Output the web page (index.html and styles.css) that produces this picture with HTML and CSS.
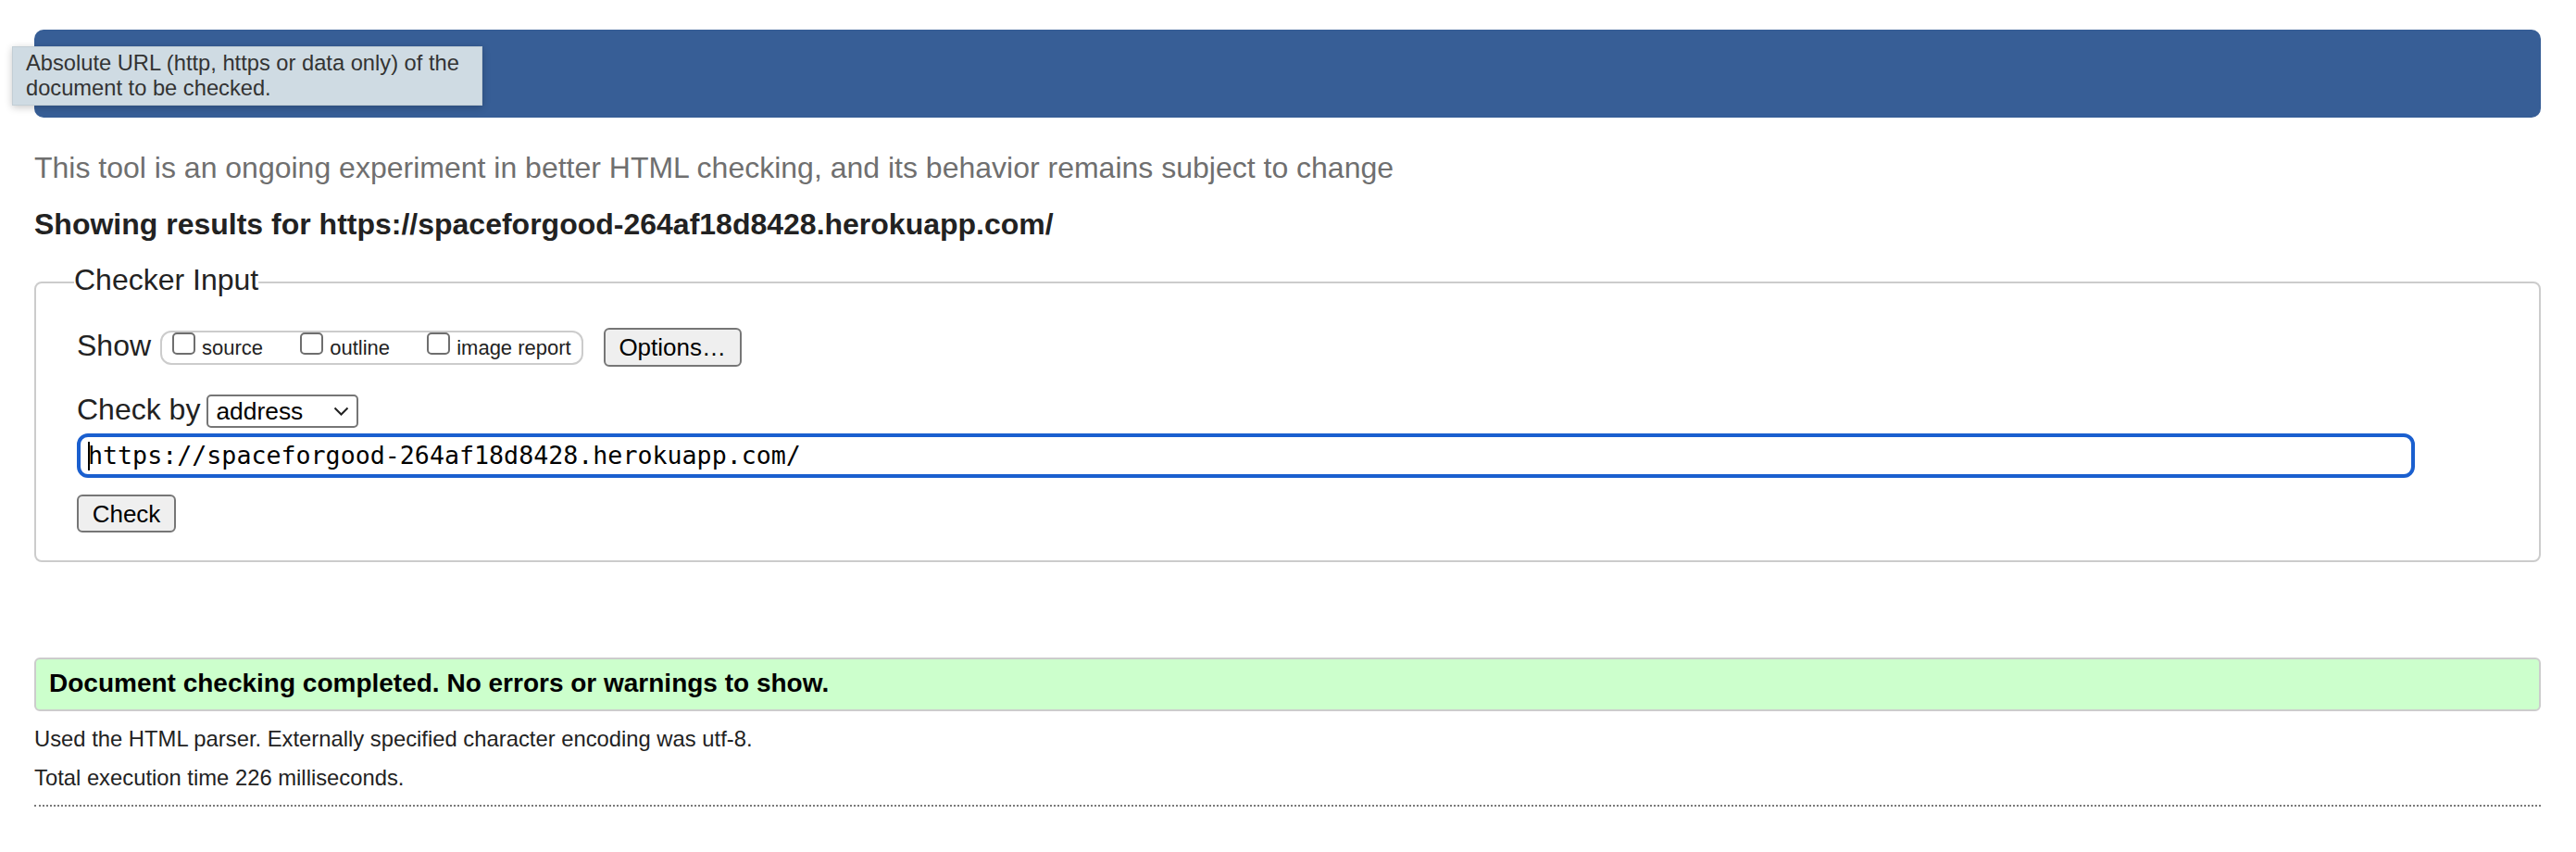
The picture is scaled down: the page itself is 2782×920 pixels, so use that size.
FILE: index.html
```html
<!DOCTYPE html>
<html lang="en">
<head>
<meta charset="utf-8">
<title>Nu Html Checker</title>
<link rel="stylesheet" href="styles.css">
</head>
<body>
<header class="banner"></header>
<div class="tooltip">Absolute URL (http, https or data only) of the<br>document to be checked.</div>
<p class="intro">This tool is an ongoing experiment in better HTML checking, and its behavior remains subject to change</p>
<p class="showing">Showing results for https://spaceforgood-264af18d8428.herokuapp.com/</p>
<fieldset class="checker">
  <legend class="legend">Checker Input</legend>
  <div class="row row-show">
    <span class="label show-label">Show</span>
    <div class="show-group">
      <label class="opt"><span class="cb"></span>source</label>
      <label class="opt"><span class="cb"></span>outline</label>
      <label class="opt"><span class="cb"></span>image report</label>
    </div>
    <button class="btn btn-options" type="button">Options…</button>
  </div>
  <div class="row row-by">
    <span class="label by-label">Check by</span>
    <div class="select"><span class="select-text">address</span><svg class="chev" width="17" height="10" viewBox="0 0 17 10"><polyline points="1.5,1.5 8.5,8.5 15.5,1.5" fill="none" stroke="#222" stroke-width="2"/></svg></div>
  </div>
  <div class="urlbox"><span class="caret"></span><span class="url">https://spaceforgood-264af18d8428.herokuapp.com/</span></div>
  <div class="row-check"><button class="btn btn-check" type="button">Check</button></div>
</fieldset>
<div class="success">Document checking completed. No errors or warnings to show.</div>
<p class="details first">Used the HTML parser. Externally specified character encoding was utf-8.</p>
<p class="details">Total execution time 226 milliseconds.</p>
<div class="dotted"></div>
</body>
</html>
```

FILE: styles.css
```css
html, body {
  background: #ffffff;
}
body {
  margin: 0;
  padding: 32px 38px 0 37px;
  font-family: "Liberation Sans", Arial, sans-serif;
  color: #222222;
}
.banner {
  height: 95px;
  background: #375e96;
  border-radius: 10px;
}
.tooltip {
  position: absolute;
  left: 13px;
  top: 50px;
  box-sizing: border-box;
  width: 508px;
  height: 64px;
  padding: 4px 0 0 14px;
  background: #cfdbe3;
  color: #333333;
  font-size: 23.7px;
  line-height: 27px;
  white-space: nowrap;
  box-shadow: 0 2px 8px rgba(0, 0, 0, 0.22);
  border: 1px solid rgba(0, 0, 0, 0.06);
}
.intro {
  margin: 36px 0 0;
  font-size: 32px;
  line-height: 36px;
  color: #6f6f6f;
}
.showing {
  margin: 25px 0 0;
  font-size: 32px;
  line-height: 36px;
  font-weight: bold;
  color: #222222;
}
.checker {
  margin: 24px 0 0;
  padding: 28px 44px 30px 44px;
  border: 2px solid #cccccc;
  border-radius: 8px;
  min-width: 0;
}
.legend {
  padding: 0 0 6px 0;
  margin-left: -3px;
  font-size: 32px;
  line-height: 36px;
  color: #222222;
}
.row {
  display: flex;
  align-items: flex-start;
}
.label {
  font-size: 32px;
  line-height: 36px;
  color: #222222;
  white-space: nowrap;
}
.show-label {
  margin-top: 1px;
}
.show-group {
  box-sizing: border-box;
  height: 37px;
  margin: 3px 0 0 10px;
  padding: 0 11px;
  border: 2px solid #cccccc;
  border-radius: 12px;
  font-size: 22px;
  white-space: nowrap;
  color: #222222;
}
.opt {
  margin-right: 34px;
}
.opt:last-child {
  margin-right: 0;
}
.cb {
  display: inline-block;
  box-sizing: border-box;
  width: 25px;
  height: 24px;
  margin-right: 7px;
  border: 2px solid #6e6e6e;
  border-radius: 5px;
  background: #ffffff;
  vertical-align: baseline;
}
.btn {
  box-sizing: border-box;
  margin: 0;
  padding: 0;
  border: 2px solid #767676;
  border-radius: 6px;
  background: #efefef;
  color: #000000;
  font-family: "Liberation Sans", Arial, sans-serif;
  font-size: 26px;
  line-height: 30px;
}
.btn-options {
  width: 149px;
  height: 42px;
  margin-left: 22px;
}
.row-by {
  margin-top: 30px;
}
.by-label {
  margin-top: -2px;
}
.select {
  box-sizing: border-box;
  display: flex;
  align-items: center;
  justify-content: space-between;
  width: 164px;
  height: 36px;
  margin-left: 7px;
  padding: 0 8px 0 8px;
  border: 2px solid #767676;
  border-radius: 5px;
  background: #ffffff;
  font-size: 26.4px;
  line-height: 32px;
  color: #000000;
}
.chev {
  display: block;
}
.urlbox {
  box-sizing: border-box;
  display: flex;
  align-items: center;
  width: 2525px;
  height: 48px;
  margin-top: 6px;
  padding: 0 8px;
  border: 4px solid #1a5fcf;
  border-radius: 12px;
  background: #ffffff;
}
.caret {
  display: block;
  width: 2px;
  height: 31px;
  margin-right: -2px;
  background: #000000;
}
.url {
  font-family: "DejaVu Sans Mono", "Liberation Mono", monospace;
  font-size: 26.65px;
  line-height: 40px;
  color: #000000;
  white-space: nowrap;
}
.row-check {
  margin-top: 18px;
}
.btn-check {
  display: block;
  width: 107px;
  height: 41px;
}
.success {
  box-sizing: border-box;
  height: 58px;
  margin-top: 103px;
  padding: 10px 14px 12px;
  border: 2px solid #cccccc;
  border-radius: 6px;
  background: #ccffcc;
  color: #000000;
  font-size: 28px;
  line-height: 32px;
  font-weight: bold;
}
.details {
  margin: 14px 0 0;
  font-size: 23.8px;
  line-height: 28px;
  color: #222222;
}
.details.first {
  margin-top: 16px;
}
.dotted {
  margin-top: 15px;
  border-top: 2px dotted #7a7a7a;
}
```
